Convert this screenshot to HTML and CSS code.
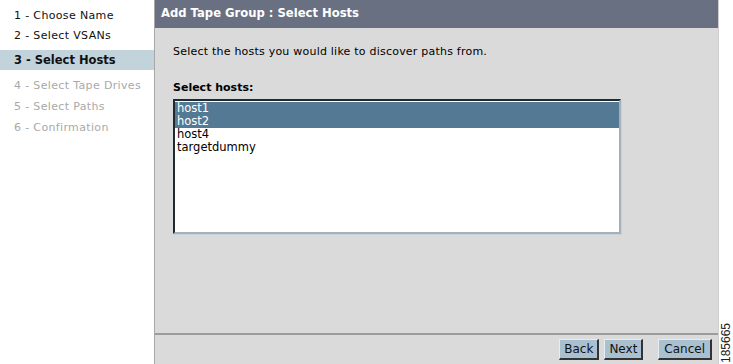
FILE: index.html
```html
<!DOCTYPE html>
<html lang="en">
<head>
    <meta charset="UTF-8">
    <title>Add Tape Group : Select Hosts</title>
    <link rel="stylesheet" href="styles.css">
</head>
<body>
    <div class="wizard">
        <!-- Step list -->
        <ul class="steps">
            <li class="step">1 - Choose Name</li>
            <li class="step">2 - Select VSANs</li>
            <li class="step current">3 - Select Hosts</li>
            <li class="step disabled">4 - Select Tape Drives</li>
            <li class="step disabled">5 - Select Paths</li>
            <li class="step disabled">6 - Confirmation</li>
        </ul>

        <div class="panel">
            <div class="panel-title">Add Tape Group : Select Hosts</div>
            <div class="panel-body">
                <p class="intro">Select the hosts you would like to discover paths from.</p>
                <div class="field-label">Select hosts:</div>
                <div class="listbox">
                    <div class="option selected">host1</div>
                    <div class="option selected">host2</div>
                    <div class="option">host4</div>
                    <div class="option">targetdummy</div>
                </div>
            </div>
            <div class="panel-footer">
                <button class="btn">Back</button>
                <button class="btn">Next</button>
                <button class="btn cancel">Cancel</button>
            </div>
        </div>

        <div class="margin">
            <span class="fig-id">185665</span>
        </div>
    </div>
</body>
</html>
```

FILE: styles.css
```css
body {
    margin: 0;
    padding: 0;
    font-family: "DejaVu Sans", Verdana, sans-serif;
    font-size: 11px;
    background: #fff;
}

.wizard {
    display: flex;
    width: 733px;
    height: 364px;
}

/* left step list */
.steps {
    list-style: none;
    margin: 0;
    padding: 5px 0 0 0;
    width: 154px;
    border-right: 1px solid #a8a8a8;
    display: flex;
    flex-direction: column;
}

.step {
    height: 20px;
    line-height: 21px;
    padding-left: 14px;
    color: #111;
    white-space: nowrap;
    letter-spacing: 0.35px;
}

.step.current {
    background: #c3d3dc;
    font-weight: bold;
    font-size: 11.5px;
    letter-spacing: 0;
    margin: 5px 0 5px 0;
}

.step.disabled {
    color: #a9a9a9;
    height: 21px;
    line-height: 21px;
}

/* main panel */
.panel {
    width: 563px;
    background: #dadada;
    display: flex;
    flex-direction: column;
    border-right: 1px solid #cfcfcf;
}

.panel-title {
    height: 28px;
    line-height: 27px;
    background: #687081;
    color: #fff;
    font-weight: bold;
    font-size: 11.6px;
    padding-left: 6px;
}

.panel-body {
    flex: 1;
    padding: 16px 0 0 18px;
}

.intro {
    margin: 0 0 22px 0;
    line-height: 15px;
    letter-spacing: 0.22px;
}

.field-label {
    font-weight: bold;
    margin-bottom: 4px;
    line-height: 14px;
}

.listbox {
    width: 444px;
    height: 130px;
    background: #fff;
    border: 2px solid #a6b0bb;
    border-top-color: #1e2a33;
    border-left-color: #1e2a33;
    box-shadow: 1px 1px 0 #c8d0d8;
    padding-top: 1px;
    font-size: 11.5px;
}

.option {
    height: 13px;
    line-height: 13px;
    padding-left: 2px;
    color: #000;
}

.option.selected {
    background: #537995;
    color: #fff;
}

.panel-footer {
    border-top: 2px solid #9c9c9c;
    height: 29px;
    display: flex;
    justify-content: flex-end;
    align-items: center;
    gap: 5px;
    padding-right: 6px;
}

.btn {
    font-family: "DejaVu Sans", Verdana, sans-serif;
    font-size: 12px;
    height: 21px;
    padding: 0 4px;
    background: #a8c0d0;
    color: #111;
    border: 1px solid #e4edf2;
    border-right: 2px solid #333;
    border-bottom: 2px solid #333;
}

.btn.cancel {
    margin-left: 10px;
    padding: 0 5px;
}

/* figure number strip */
.margin {
    flex: 1;
    display: flex;
    align-items: flex-end;
    justify-content: center;
}

.fig-id {
    writing-mode: vertical-rl;
    transform: rotate(180deg);
    font-family: "Liberation Sans", Arial, sans-serif;
    font-size: 12px;
    color: #222;
    padding-top: 1px;
}
```
